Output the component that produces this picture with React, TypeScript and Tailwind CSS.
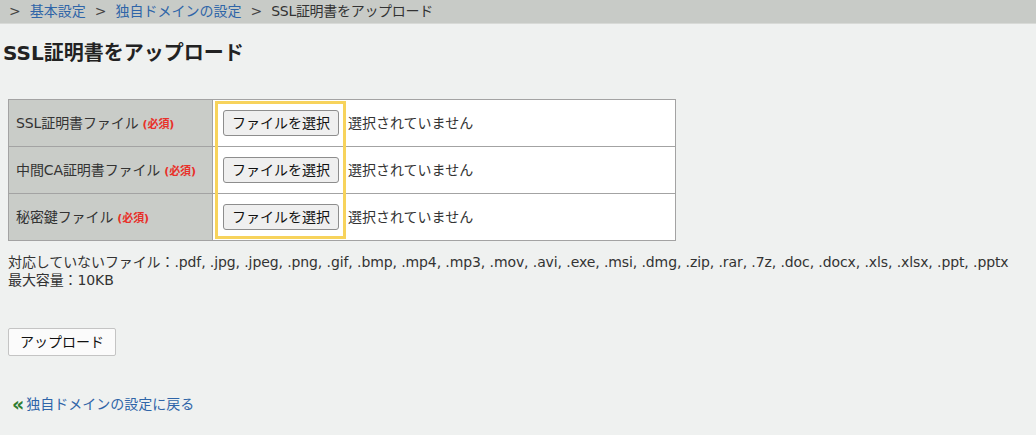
import React from "react";

const font = { fontFamily: '"DejaVu Sans", "Noto Sans CJK JP", sans-serif' };

function Req() {
  return <span className="ml-[4px] text-[11px] font-bold text-[#e8302a]">(必須)</span>;
}

function Row({ label }: { label: React.ReactNode }) {
  return (
    <tr>
      <td className="w-[204px] h-[47px] bg-[#c9ccc8] border border-[#a3a3a3] pl-[7px] text-[14px] text-[#333] tracking-[-0.1px]">
        {label}
      </td>
      <td className="bg-white border border-[#a3a3a3] pl-[10px]">
        <div className="flex items-center">
          <button className="h-[26px] w-[116px] rounded-[3px] border border-[#8d8d8d] bg-[#efefef] text-[14px] text-[#111] leading-none">
            ファイルを選択
          </button>
          <span className="ml-[9px] text-[14px] text-[#333]">選択されていません</span>
        </div>
      </td>
    </tr>
  );
}

export default function App() {
  return (
    <div className="w-[1036px] h-[435px] bg-[#eff1f0] text-[#333]" style={font}>
      <div className="h-[24px] bg-[#c8cbc7] border-b border-[#d8dad7] flex items-center pl-[9px] text-[14px] gap-[9px]">
        <span className="text-[#444]">&gt;</span>
        <span className="text-[#2f65a8]">基本設定</span>
        <span className="text-[#444]">&gt;</span>
        <span className="text-[#2f65a8]">独自ドメインの設定</span>
        <span className="text-[#444]">&gt;</span>
        <span className="text-[#333] tracking-[-0.3px]">SSL証明書をアップロード</span>
      </div>
      <h1 className="ml-[3px] mt-[16px] text-[20px] font-bold text-[#222] leading-[26px]">SSL証明書をアップロード</h1>
      <div className="relative ml-[8px] mt-[33px] w-[668px]">
        <table className="w-[668px] border-collapse">
          <tbody>
            <Row label={<>SSL証明書ファイル<Req /></>} />
            <Row label={<>中間CA証明書ファイル<Req /></>} />
            <Row label={<>秘密鍵ファイル<Req /></>} />
          </tbody>
        </table>
        <div className="absolute left-[207px] top-[2px] w-[131px] h-[138px] border-[3px] border-[#f7d35c] pointer-events-none" />
      </div>
      <div className="ml-[8px] mt-[12px] text-[14px] leading-[18px] text-[#333] tracking-[-0.1px]">
        <div>対応していないファイル：.pdf, .jpg, .jpeg, .png, .gif, .bmp, .mp4, .mp3, .mov, .avi, .exe, .msi, .dmg, .zip, .rar, .7z, .doc, .docx, .xls, .xlsx, .ppt, .pptx</div>
        <div>最大容量：10KB</div>
      </div>
      <button className="ml-[8px] mt-[39px] h-[28px] w-[108px] rounded-[2px] border border-[#c4c4c4] bg-[#fbfbfb] text-[14px] text-[#111] leading-none">
        アップロード
      </button>
      <div className="ml-[12px] mt-[38px] flex items-center text-[14px]">
        <span className="text-[#2f7d32] font-bold text-[19px] leading-none mr-[2px]">«</span>
        <span className="text-[#2f65a8]">独自ドメインの設定に戻る</span>
      </div>
    </div>
  );
}
